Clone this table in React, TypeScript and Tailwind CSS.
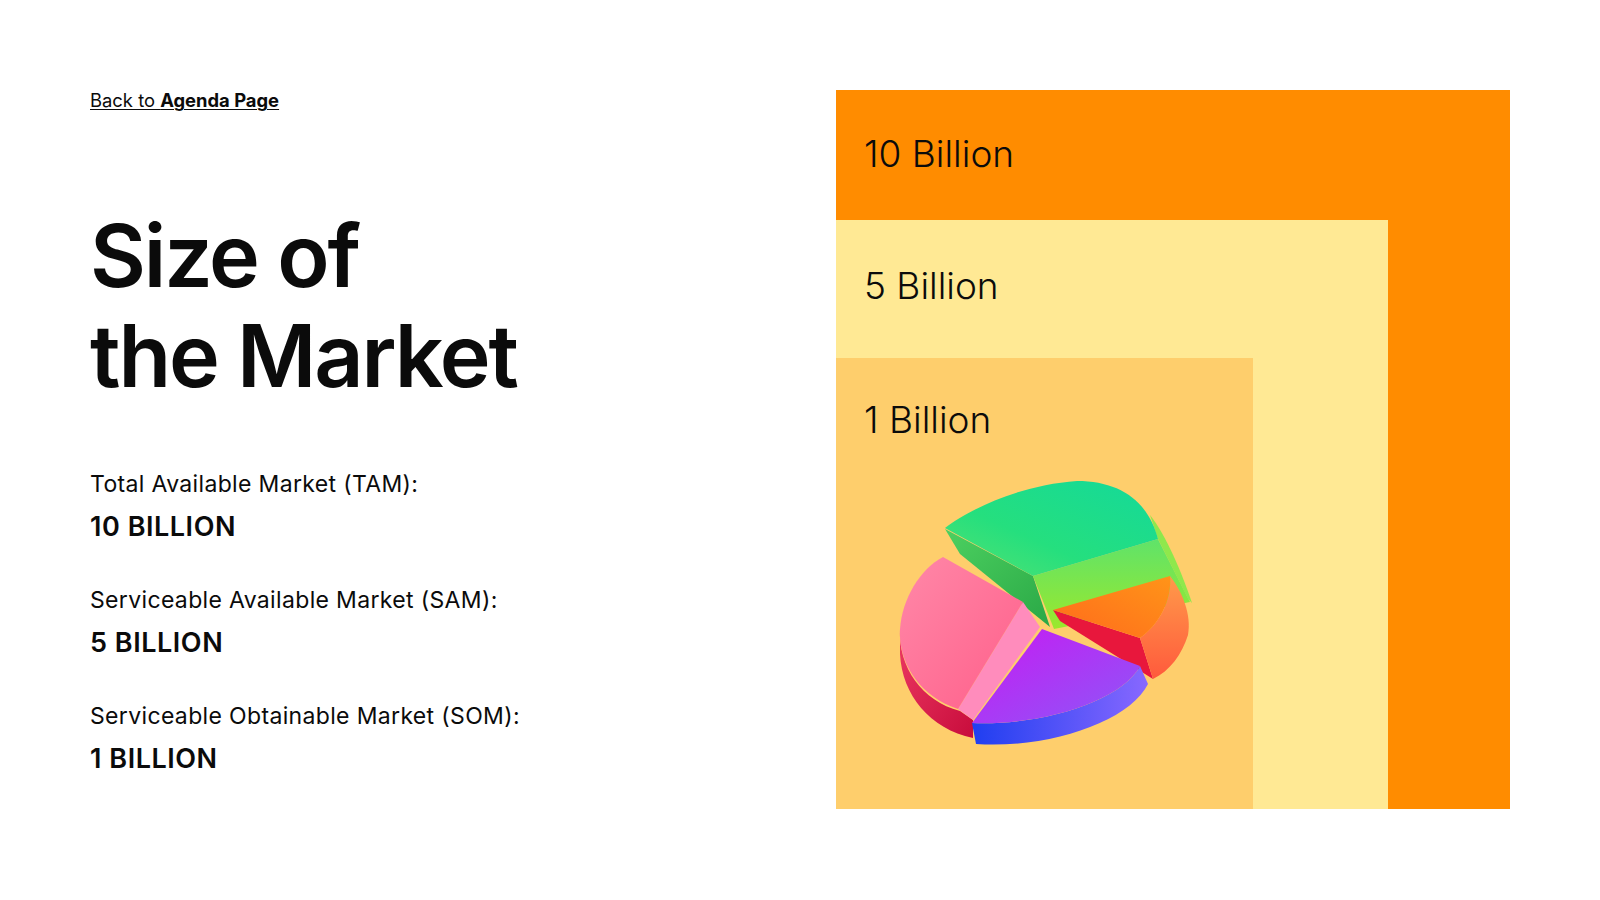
const FONT = { fontFamily: 'Inter, "Noto Sans", sans-serif' };

const markets = [
  { label: 'Total Available Market (TAM):', value: '10 BILLION' },
  { label: 'Serviceable Available Market (SAM):', value: '5 BILLION' },
  { label: 'Serviceable Obtainable Market (SOM):', value: '1 BILLION' },
];

// 3D pie chart illustration
function PieChart() {
  return (
    <svg width="320" height="290" viewBox="60 30 320 290" className="block">
      <defs>
        <linearGradient id="gTop" x1="1" y1="0" x2="0" y2="1">
          <stop offset="0" stopColor="#14d99a" />
          <stop offset="0.6" stopColor="#25df7e" />
          <stop offset="1" stopColor="#55e270" />
        </linearGradient>
        <linearGradient id="gCut" x1="0" y1="0" x2="0" y2="1">
          <stop offset="0" stopColor="#5fe36a" />
          <stop offset="1" stopColor="#9be82c" />
        </linearGradient>
        <linearGradient id="gDark" x1="0" y1="0" x2="1" y2="1">
          <stop offset="0" stopColor="#4cd060" />
          <stop offset="1" stopColor="#2aa846" />
        </linearGradient>
        <linearGradient id="oTop" x1="1" y1="0" x2="0" y2="1">
          <stop offset="0" stopColor="#ff9418" />
          <stop offset="1" stopColor="#ff6a1c" />
        </linearGradient>
        <linearGradient id="oRim" x1="0" y1="0" x2="0" y2="1">
          <stop offset="0" stopColor="#ff9a4a" />
          <stop offset="1" stopColor="#ff5a3c" />
        </linearGradient>
        <linearGradient id="pTop" x1="0" y1="0" x2="1" y2="1">
          <stop offset="0" stopColor="#c81af2" />
          <stop offset="1" stopColor="#8c58f8" />
        </linearGradient>
        <linearGradient id="pRim" x1="0" y1="0" x2="1" y2="0">
          <stop offset="0" stopColor="#1f3ef0" />
          <stop offset="1" stopColor="#8868ff" />
        </linearGradient>
        <linearGradient id="kTop" x1="0" y1="0" x2="1" y2="1">
          <stop offset="0" stopColor="#ff88a8" />
          <stop offset="1" stopColor="#ff5f8a" />
        </linearGradient>
        <linearGradient id="kRim" x1="0" y1="0" x2="1" y2="1">
          <stop offset="0" stopColor="#ec3a62" />
          <stop offset="1" stopColor="#c80c3c" />
        </linearGradient>
      </defs>

      {/* green slice */}
      <path d="M125,90 L213,137 L230,188 L140,115 Z" fill="url(#gDark)" />
      <path d="M213,137 L338,100 L370,163 L234,190 Z" fill="url(#gCut)" />
      <path d="M330,76 C346,96 362,134 372,164 L368,160 L338,100 Z" fill="#8fe84c" />
      <path d="M125,89 C150,70 200,46 257,42 C300,42 328,62 338,100 L213,137 Z" fill="url(#gTop)" />

      {/* orange slice */}
      <path d="M233,171 L320,199 L333,240 L240,182 Z" fill="#e8173c" />
      <path d="M350,137 C362,152 372,176 368,196 C362,215 350,232 333,240 L320,199 C340,185 352,160 350,137 Z" fill="url(#oRim)" />
      <path d="M233,171 L350,137 C352,160 340,185 320,199 Z" fill="url(#oTop)" />

      {/* pink slice */}
      <path d="M80,190 C78,228 102,262 140,272 L153,281 L153,299 C110,290 82,256 80,215 Z" fill="url(#kRim)" />
      <path d="M203,163 L220,188 L153,281 L138,270 Z" fill="#ff8cbc" />
      <path d="M123,118 L203,163 L138,270 C100,258 78,224 80,190 C82,160 100,130 123,118 Z" fill="url(#kTop)" />

      {/* purple slice */}
      <path d="M152,284 C222,287 302,262 320,227 L328,245 C310,282 230,310 156,305 Z" fill="url(#pRim)" />
      <path d="M222,190 L320,227 C302,262 222,287 152,284 Z" fill="url(#pTop)" />
    </svg>
  );
}

export default function App() {
  return (
    <div className="w-[1600px] h-[900px] bg-white text-[#0b0b0b] flex" style={FONT}>
      {/* Left column */}
      <div className="flex-1 pl-[90px] pt-[88px]">
        <a href="#" className="text-[18.4px] leading-[24px] underline underline-offset-2 decoration-1">
          Back to <span className="font-bold">Agenda Page</span>
        </a>

        <h1 className="mt-[93px] text-[86px] leading-[100px] font-semibold tracking-[-0.025em]">
          Size of
          <br />
          the Market
        </h1>

        <div className="mt-[63px] flex flex-col gap-[41px]">
          {markets.map((m) => (
            <div key={m.label}>
              <p className="text-[23px] leading-[30px] tracking-[0.015em]">{m.label}</p>
              <p className="mt-[11px] text-[27px] leading-[34px] font-semibold tracking-[0.02em]">{m.value}</p>
            </div>
          ))}
        </div>
      </div>

      {/* Right nested boxes */}
      <div className="mr-[90px] mt-[90px] w-[674px] h-[719px] bg-[#ff8c00] flex flex-col">
        <div className="h-[130px] shrink-0 pl-[28px] pt-[45px] text-[37px] leading-none font-light">10 Billion</div>
        <div className="w-[552px] flex-1 bg-[#ffe994] flex flex-col">
          <div className="h-[138px] shrink-0 pl-[28px] pt-[47px] text-[37px] leading-none font-light">5 Billion</div>
          <div className="w-[417px] flex-1 bg-[#fece6c]">
            <div className="pl-[28px] pt-[43px] text-[37px] leading-none font-light">1 Billion</div>
            <div className="ml-[44px] mt-[31px]">
              <PieChart />
            </div>
          </div>
        </div>
      </div>
    </div>
  );
}
